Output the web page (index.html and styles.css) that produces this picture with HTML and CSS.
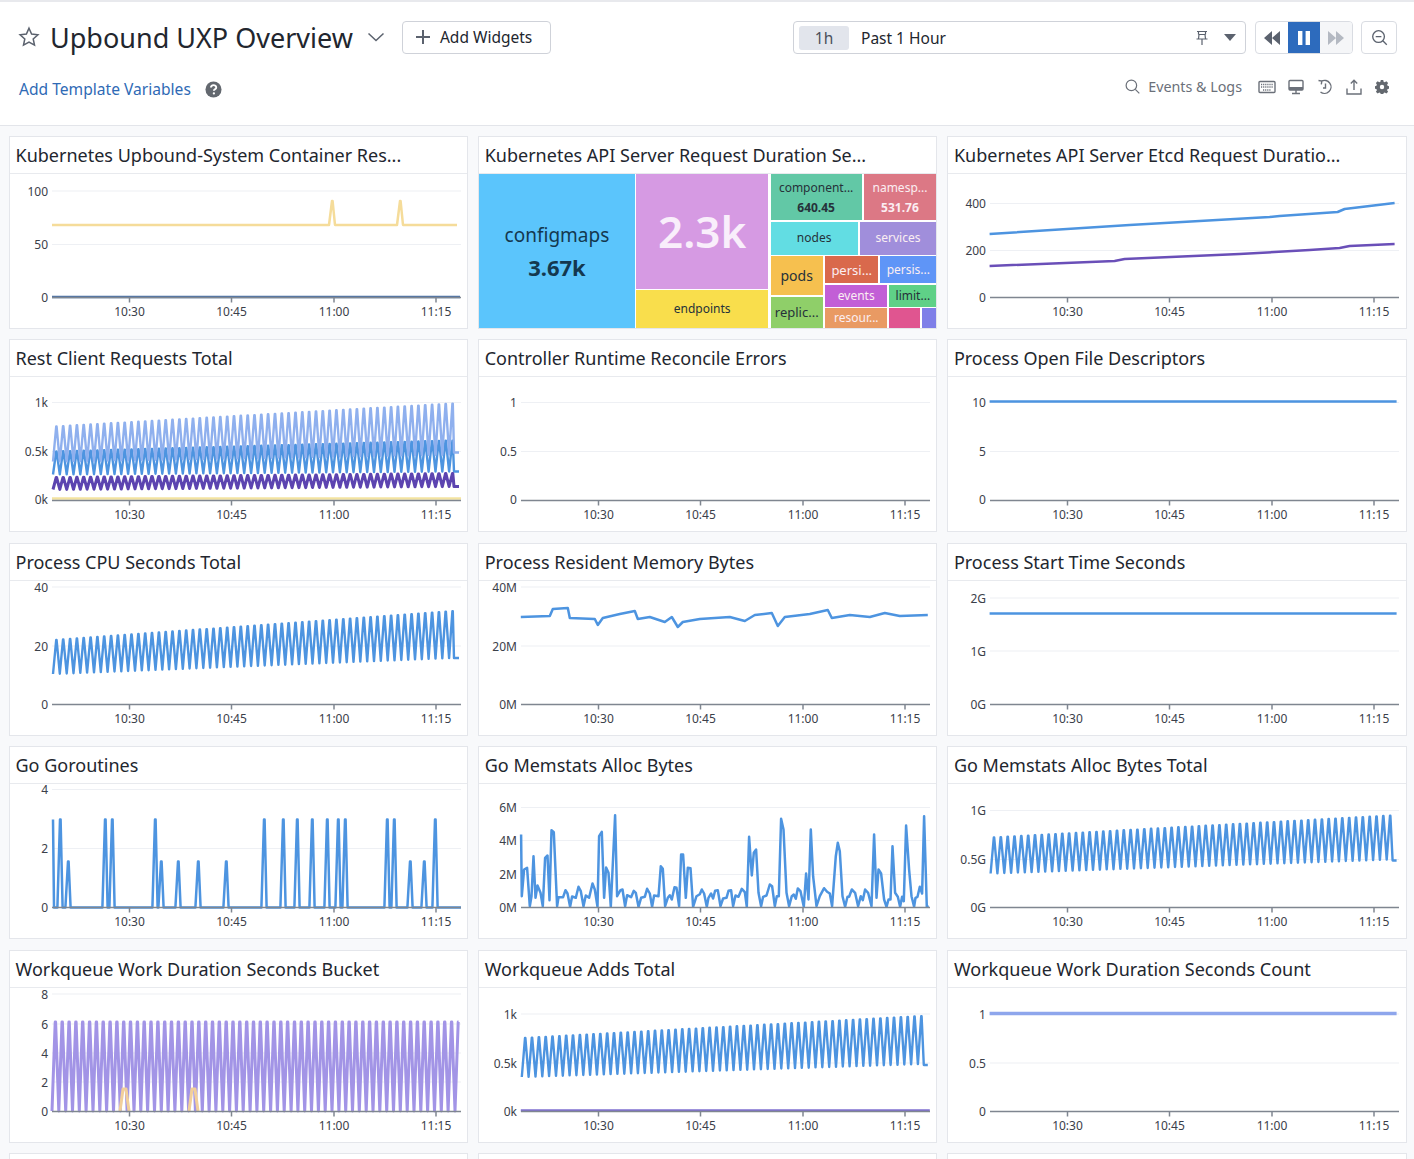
FILE: index.html
```html
<!DOCTYPE html>
<html>
<head>
  <title>Upbound UXP Overview</title>
  <link rel="stylesheet" href="styles.css">
</head>
<body>

  <!-- Dashboard header -->
  <header class="header">
    <div class="header-row top-row">
      <svg class="star-icon" viewBox="0 0 22 22"><path d="M11 2.2l2.6 5.8 6.3.7-4.7 4.2 1.3 6.2L11 16l-5.5 3.1 1.3-6.2-4.7-4.2 6.3-.7z"/></svg>
      <h1 class="dash-title">Upbound UXP Overview</h1>
      <svg class="chevron-icon" viewBox="0 0 18 10"><path d="M1.5 1.5L9 8.5l7.5-7"/></svg>
      <button class="add-btn"><svg viewBox="0 0 14 14"><path d="M7 0v14M0 7h14"/></svg>Add Widgets</button>

      <div class="time-picker">
        <span class="time-chip">1h</span>
        <span class="time-label">Past 1 Hour</span>
        <svg class="pin-icon" viewBox="0 0 14 16"><path d="M2 1.5h10M3.5 1.5v3M10.5 1.5v3M3.5 4.5h7M1.5 9h11M4 4.5L3.5 9M10 4.5l.5 4.5M7 9v6"/></svg>
        <svg class="caret-icon" viewBox="0 0 12 7"><path d="M0 0h12L6 7z"/></svg>
      </div>

      <div class="player">
        <button class="player-btn"><svg viewBox="0 0 16 14"><path d="M8 0v14L0 7zM16 0v14L8 7z"/></svg></button>
        <button class="player-btn active"><svg viewBox="0 0 12 14"><path d="M0 0h4.4v14H0zM7.6 0H12v14H7.6z"/></svg></button>
        <button class="player-btn off"><svg viewBox="0 0 16 14"><path d="M0 0l8 7-8 7zM8 0l8 7-8 7z"/></svg></button>
      </div>

      <button class="zoom-btn">
        <svg viewBox="0 0 18 18"><circle cx="8" cy="8" r="6.2"/><path d="M5 8h6M12.5 12.5l4.2 4.2"/></svg>
      </button>
    </div>

    <div class="header-row sub-row">
      <a class="template-link">Add Template Variables</a>
      <svg class="help-icon" viewBox="0 0 18 18"><circle cx="9" cy="9" r="8.5"/><path d="M6.3 7c0-3.4 5.6-3.4 5.6-.2 0 2-2.5 2-2.5 3.6" fill="none" stroke="#fff" stroke-width="2"/><circle cx="9.4" cy="13.2" r="1.2" fill="#fff"/></svg>

      <div class="tools">
        <svg class="search-icon" viewBox="0 0 16 16"><circle cx="6.8" cy="6.8" r="5.6"/><path d="M11 11l4.3 4.3"/></svg>
        <span class="tools-label">Events &amp; Logs</span>
        <svg class="tool-icon keyboard" viewBox="0 0 18 14"><rect x="1" y="1.5" width="16" height="11" rx="1"/><path d="M3 4.5h12M3 7h12M5 10h8" stroke-dasharray="1.2 .9"/></svg>
        <svg class="tool-icon" viewBox="0 0 16 15"><rect x="1" y="1" width="14" height="9.5" rx="1"/><path class="solid" d="M1 7.5h14v3H1z"/><path d="M8 10.5v3M4 14h8"/></svg>
        <svg class="tool-icon" viewBox="0 0 16 16"><path d="M4.500 2.100A6.500 6.500 0 1 1 3.500 13M1.500 1.500l3.300.5-.5 3.300M8.500 4.500v4.500H6"/></svg>
        <svg class="tool-icon" viewBox="0 0 16 16"><path d="M8 11V1.500M4.800 4.500L8 1.200l3.200 3.300M1 9.500v5.500h14V9.500"/></svg>
        <svg class="tool-icon gear" viewBox="0 0 16 16"><path d="M6.600 0h2.800l.4 2.100 1.300.6 1.900-1.200 2 2-1.200 1.800.6 1.400 2.100.4v2.800l-2.100.4-.6 1.400 1.200 1.800-2 2-1.900-1.200-1.300.6-.4 2.100H6.600l-.4-2.100-1.300-.6L3 15.500l-2-2 1.200-1.800-.6-1.400-2.100-.4V7.100l2.100-.4.6-1.400L1 3.500l2-2 1.900 1.200 1.300-.6zM8 5.500a2.500 2.500 0 1 0 0 5 2.500 2.500 0 0 0 0-5z" fill-rule="evenodd"/></svg>
      </div>
    </div>
  </header>

  <!-- Widgets -->
  <main class="board">
    <section class="panel">
      <h2 class="panel-title">Kubernetes Upbound-System Container Res...</h2>
      <div class="chart"></div>
    </section>

    <section class="panel">
      <h2 class="panel-title">Kubernetes API Server Request Duration Se...</h2>
      <div class="treemap">
        <div class="tile tile-configmaps">
          <span class="tile-name big">configmaps</span>
          <b class="tile-value big">3.67k</b>
        </div>
        <div class="tree-col tree-mid">
          <div class="tile tile-huge"><b>2.3k</b></div>
          <div class="tile tile-endpoints">endpoints</div>
        </div>
        <div class="tree-col tree-right">
          <div class="tree-row row-a">
            <div class="tile tile-component">
              <span>component...</span>
              <b>640.45</b>
            </div>
            <div class="tile tile-namespaces light">
              <span>namesp...</span>
              <b>531.76</b>
            </div>
          </div>
          <div class="tree-row row-b">
            <div class="tile tile-nodes">nodes</div>
            <div class="tile tile-services light">services</div>
          </div>
          <div class="tree-row row-c">
            <div class="tree-col col-pods">
              <div class="tile tile-pods">pods</div>
              <div class="tile tile-replic">replic...</div>
            </div>
            <div class="tree-col col-rest">
              <div class="tree-row rest-a">
                <div class="tile tile-persi light">persi...</div>
                <div class="tile tile-persis light">persis...</div>
              </div>
              <div class="tree-row rest-b">
                <div class="tile tile-events light">events</div>
                <div class="tile tile-limit">limit...</div>
              </div>
              <div class="tree-row rest-c">
                <div class="tile tile-resour light">resour...</div>
                <div class="tile tile-pink"></div>
                <div class="tile tile-violet"></div>
              </div>
            </div>
          </div>
        </div>
      </div>
    </section>

    <section class="panel">
      <h2 class="panel-title">Kubernetes API Server Etcd Request Duratio...</h2>
      <div class="chart"></div>
    </section>

    <section class="panel"><h2 class="panel-title">Rest Client Requests Total</h2><div class="chart"></div></section>
    <section class="panel"><h2 class="panel-title">Controller Runtime Reconcile Errors</h2><div class="chart"></div></section>
    <section class="panel"><h2 class="panel-title">Process Open File Descriptors</h2><div class="chart"></div></section>

    <section class="panel"><h2 class="panel-title">Process CPU Seconds Total</h2><div class="chart"></div></section>
    <section class="panel"><h2 class="panel-title">Process Resident Memory Bytes</h2><div class="chart"></div></section>
    <section class="panel"><h2 class="panel-title">Process Start Time Seconds</h2><div class="chart"></div></section>

    <section class="panel"><h2 class="panel-title">Go Goroutines</h2><div class="chart"></div></section>
    <section class="panel"><h2 class="panel-title">Go Memstats Alloc Bytes</h2><div class="chart"></div></section>
    <section class="panel"><h2 class="panel-title">Go Memstats Alloc Bytes Total</h2><div class="chart"></div></section>

    <section class="panel"><h2 class="panel-title">Workqueue Work Duration Seconds Bucket</h2><div class="chart"></div></section>
    <section class="panel"><h2 class="panel-title">Workqueue Adds Total</h2><div class="chart"></div></section>
    <section class="panel"><h2 class="panel-title">Workqueue Work Duration Seconds Count</h2><div class="chart"></div></section>

    <!-- Next row, cut off by the window -->
    <section class="panel"></section>
    <section class="panel"></section>
    <section class="panel"></section>
  </main>

  <script src="charts.js"></script>
</body>
</html>
```

FILE: styles.css
```css
* {
  box-sizing: border-box;
}

html, body {
  height: 100%;
  overflow: hidden;
}

body {
  margin: 0;
  background-color: #f8f9fb;
  font-family: "Noto Sans", sans-serif;
  color: #22262e;
}

button {
  font-family: inherit;
  padding: 0;
  background: none;
}

svg {
  display: block;
}

/* Header */
.header {
  height: 126px;
  background-color: white;
  border-top: 2px solid #e8e9ed;
  border-bottom: 1px solid #e3e5ea;
  padding: 18px 17px 0 19px;
}

.header-row {
  display: flex;
  align-items: center;
}

.top-row {
  height: 34px;
}

.star-icon {
  width: 22px;
  height: 22px;
  margin-left: -1px;
  fill: none;
  stroke: #5b626e;
  stroke-width: 1.500;
}

.dash-title {
  margin: 2px 0 0 10px;
  font-size: 27px;
  font-weight: 400;
  line-height: 34px;
  color: #22262e;
}

.chevron-icon {
  width: 18px;
  height: 10px;
  margin-left: 14px;
  fill: none;
  stroke: #5b626e;
  stroke-width: 1.500;
}

.add-btn {
  display: flex;
  align-items: center;
  width: 149px;
  height: 33px;
  margin-left: 17px;
  padding-left: 13px;
  border: 1px solid #cfd2d9;
  border-radius: 4px;
  font-size: 15.500px;
  color: #22262e;
}

.add-btn svg {
  width: 14px;
  height: 14px;
  margin-right: 10px;
  fill: none;
  stroke: #5b626e;
  stroke-width: 2;
}

.time-picker {
  display: flex;
  align-items: center;
  width: 453px;
  height: 33px;
  margin-left: auto;
  margin-top: 1px;
  padding: 0 9px 0 5px;
  border: 1px solid #cfd2d9;
  border-radius: 4px;
  font-size: 15.500px;
}

.time-chip {
  width: 50px;
  height: 24px;
  line-height: 24px;
  text-align: center;
  background-color: #e2e5ec;
  border-radius: 3px;
  color: #4a505c;
}

.time-label {
  margin-left: 12px;
  color: #22262e;
}

.pin-icon {
  width: 14px;
  height: 16px;
  margin-left: auto;
  fill: none;
  stroke: #5b626e;
  stroke-width: 1.200;
}

.caret-icon {
  width: 12px;
  height: 7px;
  margin-left: 15px;
  fill: #5b626e;
}

.player {
  display: flex;
  width: 98px;
  height: 33px;
  margin-left: 9px;
  margin-top: 1px;
  border: 1px solid #d9dce2;
  border-radius: 4px;
  overflow: hidden;
}

.player-btn {
  display: flex;
  flex: 1;
  align-items: center;
  justify-content: center;
  border: none;
}

.player-btn svg {
  width: 16px;
  height: 14px;
  fill: #5b626e;
}

.player-btn.active {
  background-color: #2d6bbd;
}

.player-btn.active svg {
  fill: white;
}

.player-btn.off {
  background-color: #f5f6f8;
}

.player-btn.off svg {
  fill: #b4b9c2;
}

.zoom-btn {
  display: flex;
  align-items: center;
  justify-content: center;
  width: 36px;
  height: 33px;
  margin-left: 8px;
  margin-top: 1px;
  border: 1px solid #d9dce2;
  border-radius: 4px;
}

.zoom-btn svg {
  width: 17px;
  height: 17px;
  fill: none;
  stroke: #5b626e;
  stroke-width: 1.400;
}

.sub-row {
  height: 24px;
  margin-top: 23px;
}

.template-link {
  font-size: 15.600px;
  color: #2f6ab5;
}

.help-icon {
  width: 17px;
  height: 17px;
  margin-left: 14px;
  fill: #63686f;
}

.tools {
  display: flex;
  align-items: center;
  margin-left: auto;
  margin-right: 8px;
  margin-top: -5px;
}

.search-icon {
  width: 15px;
  height: 15px;
  fill: none;
  stroke: #6b7079;
  stroke-width: 1.300;
}

.tools-label {
  margin-left: 8px;
  margin-right: 16px;
  font-size: 14.300px;
  color: #6b7079;
}

.tool-icon {
  width: 16px;
  height: 16px;
  margin-right: 13px;
  fill: none;
  stroke: #6b7079;
  stroke-width: 1.400;
}

.tool-icon .solid {
  fill: #6b7079;
  stroke: none;
}

.tool-icon.keyboard {
  width: 18px;
  margin-right: 12px;
}

.tool-icon.gear {
  width: 14px;
  height: 14px;
  margin-right: 0;
  fill: #63686f;
  stroke: none;
}

/* Widget grid */
.board {
  display: grid;
  grid-template-columns: repeat(3, 1fr);
  grid-auto-rows: 193px;
  column-gap: 10px;
  row-gap: 10.500px;
  height: calc(100vh - 126px);
  padding: 9.900px 7.400px 0 9px;
  overflow: hidden;
}

.panel {
  background-color: white;
  border: 1px solid #e4e6eb;
  display: flex;
  flex-direction: column;
  min-width: 0;
}

.panel-title {
  flex: none;
  height: 37px;
  margin: 0;
  padding-left: 5.500px;
  font-size: 18px;
  font-weight: 400;
  line-height: 36px;
  white-space: nowrap;
  color: #22262e;
  border-bottom: 1px solid #e8eaee;
}

.chart {
  flex: 1;
  min-height: 0;
}

.chart svg {
  width: 100%;
  height: 100%;
  overflow: visible;
}

.grid-line {
  stroke: #eef0f4;
  stroke-width: 1;
}

.axis-line {
  stroke: #7f8690;
  stroke-width: 1.500;
  fill: none;
}

.axis-text {
  font-family: "Noto Sans", sans-serif;
  font-size: 12px;
  fill: #3b404a;
}

.series {
  fill: none;
  stroke-linejoin: round;
}

/* Treemap */
.treemap {
  display: flex;
  flex: 1;
  gap: 1.500px;
  min-height: 0;
}

.tree-col {
  display: flex;
  flex-direction: column;
  gap: 1.500px;
  min-width: 0;
}

.tree-row {
  display: flex;
  gap: 2px;
  min-height: 0;
}

.tile {
  display: flex;
  flex-direction: column;
  align-items: center;
  justify-content: center;
  min-width: 0;
  font-size: 12px;
  line-height: 20px;
  white-space: nowrap;
  color: #26323a;
}

.tile b {
  font-weight: 700;
}

.tile.light {
  color: #fbeef2;
}

.tile-configmaps {
  width: 155.500px;
  background-color: #5bc5fc;
  color: #14384f;
}

.tile-name.big {
  font-size: 19px;
  line-height: 32px;
}

.tile-value.big {
  font-size: 22px;
  line-height: 32px;
}

.tree-mid {
  width: 132px;
  margin-right: 1px;
}

.tile-huge {
  flex: 115;
  background-color: #d69ae3;
  color: #f9eefb;
}

.tile-huge b {
  font-size: 44px;
  line-height: 50px;
  font-weight: 600;
}

.tile-endpoints {
  flex: 38;
  background-color: #f9de4c;
}

.tree-right {
  flex: 1;
}

.row-a {
  flex: 46;
}

.row-a .tile {
  padding-top: 1px;
}

.row-b {
  flex: 33;
}

.row-c {
  flex: 71;
  gap: 2.500px;
}

.tile-component {
  flex: 91;
  background-color: #62c8a6;
}

.tile-namespaces {
  flex: 73;
  background-color: #dc7885;
}

.tile-nodes {
  flex: 87;
  background-color: #62dde3;
}

.tile-services {
  flex: 77;
  background-color: #a08edb;
}

.col-pods {
  width: 52px;
}

.tile-pods {
  flex: 39;
  font-size: 14px;
  background-color: #f6c04f;
}

.tile-replic {
  flex: 31;
  font-size: 13px;
  background-color: #8fcf69;
}

.col-rest {
  flex: 1;
}

.rest-a {
  flex: 27;
}

.rest-b {
  flex: 22;
}

.rest-c {
  flex: 20;
}

.tile-persi {
  flex: 53;
  font-size: 13px;
  background-color: #d9694c;
}

.tile-persis {
  flex: 56;
  background-color: #5f95f7;
}

.tile-events {
  flex: 62;
  background-color: #c25fd6;
}

.tile-limit {
  flex: 47;
  background-color: #5fd187;
}

.tile-resour {
  flex: 62;
  background-color: #e99a63;
}

.tile-pink {
  flex: 31;
  background-color: #e05590;
}

.tile-violet {
  flex: 14;
  background-color: #7f7fe8;
}
```

FILE: charts.js
```js
// Draws the timeseries widgets. All numbers below are page pixels, the
// viewBox of each svg is set so they can be used directly.
const SVG_NS = "http://www.w3.org/2000/svg";

const BLUE = "#4d94e0";
const PERI = "#8ea6ec";
const PURPLE = "#5c44b0";
const YELLOW = "#f5dc9a";
const NAVY = "#4a72a8";

const COL_LEFT = [10, 479.2, 948.4];
const ROW_TOP = [174, 377.5, 581, 784.5, 988];
const PERIOD = 6.83;

// repeating peaks, top and bottom drift from left to right
function wave(x0, x1, topL, topR, botL, botR, tailTo, tailY) {
  const pts = [];
  for (let x = x0; x < x1; x += PERIOD) {
    const t = (x - x0) / (x1 - x0);
    const top = topL + (topR - topL) * t;
    const bot = botL + (botR - botL) * t;
    pts.push([x, bot], [x + PERIOD * 0.47, top], [x + PERIOD * 0.53, top]);
  }
  if (tailTo) {
    pts.push([x1 + 3, tailY], [tailTo, tailY]);
  }
  return pts;
}

function flat(x0, x1, y) {
  return [[x0, y], [x1, y]];
}

function spikes(x0, x1, base, list, w) {
  const pts = [[x0, base]];
  list.forEach(([x, y]) => {
    pts.push([x - w, base], [x, y], [x + 0.6, y], [x + w, base]);
  });
  pts.push([x1, base]);
  return pts;
}

const ALLOC_ZOOM = [154,255,156,440,163,360,172,355,180,470,185,440,191,320,197,445,203,408,212,430,219,470,226,325,233,318,239,452,245,242,252,248,262,470,266,443,280,443,287,422,293,432,301,472,307,441,318,445,326,412,333,425,341,470,348,438,358,445,368,402,375,420,383,472,388,260,396,247,403,445,409,354,416,370,423,472,436,197,442,440,452,422,458,420,466,470,472,437,484,443,492,424,498,430,506,472,514,445,525,442,532,418,540,432,547,472,553,438,566,440,573,350,579,358,586,470,594,445,600,437,606,450,614,413,620,415,628,470,634,315,640,315,648,445,654,355,662,356,670,472,680,440,690,434,696,420,703,432,711,472,716,445,724,432,730,447,736,424,744,422,752,470,760,447,770,445,776,424,784,422,790,470,797,438,806,442,816,418,825,428,831,472,838,262,846,378,852,310,859,300,866,430,874,470,880,442,890,438,900,405,907,410,915,470,921,440,927,440,934,208,941,240,950,430,958,470,966,440,972,435,978,448,984,417,992,425,1002,472,1009,372,1016,450,1023,240,1030,380,1040,470,1050,440,1063,416,1072,427,1080,432,1087,470,1098,320,1104,280,1110,305,1118,440,1126,472,1133,442,1138,442,1146,420,1156,430,1165,470,1173,440,1179,452,1186,420,1195,430,1205,470,1213,255,1220,445,1226,360,1234,372,1243,450,1250,472,1256,450,1262,450,1268,290,1276,430,1284,442,1291,472,1297,442,1302,455,1309,228,1318,360,1325,440,1333,472,1337,445,1343,442,1350,412,1357,432,1363,200,1371,472,1377,472];

function allocPoints() {
  const pts = [];
  for (let i = 0; i < ALLOC_ZOOM.length; i += 2) {
    pts.push([ALLOC_ZOOM[i] / 3 + 470, ALLOC_ZOOM[i + 1] / 3 + 750]);
  }
  return pts;
}

const CHARTS = [
  {
    col: 0, row: 0,
    labels: [["100", 191], ["50", 244.5], ["0", 297]],
    series: [
      { color: YELLOW, pts: spikes(52, 457, 225, [[332, 201], [400, 201]], 3) },
      { color: NAVY, pts: flat(52, 460, 297) }
    ]
  },
  {
    col: 2, row: 0,
    labels: [["400", 203.5], ["200", 250.5], ["0", 297]],
    series: [
      { color: BLUE, pts: [[990, 234], [1130, 225], [1270, 217], [1280, 216], [1338, 212], [1345, 209], [1370, 206], [1395, 203]] },
      { color: "#6a4fb8", pts: [[990, 266], [1115, 261], [1125, 259], [1240, 254], [1310, 250], [1340, 248], [1350, 246], [1395, 244]] }
    ]
  },
  {
    col: 0, row: 1,
    labels: [["1k", 403], ["0.5k", 452], ["0k", 500]],
    series: [
      { color: BLUE, width: 2.4, pts: wave(53, 451, 452, 441, 475, 472, 459, 472) },
      { color: "#8fb0ee", width: 2.4, pts: wave(53, 451, 427, 404, 462, 455, 459, 453) },
      { color: PURPLE, width: 3, pts: wave(53, 451, 478, 474, 490, 487, 459, 487) },
      { color: "#f3e3a0", pts: flat(52, 461, 499) }
    ]
  },
  {
    col: 1, row: 1,
    labels: [["1", 403], ["0.5", 452], ["0", 500]],
    series: []
  },
  {
    col: 2, row: 1,
    labels: [["10", 403], ["5", 452], ["0", 500]],
    series: [{ color: BLUE, pts: flat(990, 1397, 402) }]
  },
  {
    col: 0, row: 2,
    labels: [["40", 587], ["20", 646], ["0", 704.5]],
    series: [{ color: BLUE, width: 2.4, pts: wave(53, 451, 640, 611, 674, 658, 459, 658) }]
  },
  {
    col: 1, row: 2,
    labels: [["40M", 587], ["20M", 646], ["0M", 704.5]],
    series: [{
      color: BLUE,
      pts: [[521, 617], [550, 616], [553, 609], [568, 608], [570, 618], [595, 619], [598, 625], [603, 618], [620, 614], [635, 611], [638, 619], [650, 617], [665, 622], [672, 617], [678, 627], [683, 622], [700, 619], [730, 617], [745, 621], [755, 615], [772, 613], [778, 626], [785, 617], [810, 614], [828, 610], [832, 618], [850, 615], [870, 617], [885, 613], [900, 616], [928, 615]]
    }]
  },
  {
    col: 2, row: 2,
    labels: [["2G", 598], ["1G", 651], ["0G", 704.5]],
    series: [{ color: BLUE, pts: flat(990, 1397, 613.5) }]
  },
  {
    col: 0, row: 3,
    labels: [["4", 790], ["2", 849], ["0", 908]],
    series: [{
      color: BLUE,
      pts: [[53, 820]].concat(spikes(54, 461, 908, [[60, 820], [68, 862], [105, 820], [112, 820], [155, 820], [161, 862], [178, 862], [198, 862], [226, 862], [264, 820], [283, 820], [297, 820], [312, 820], [327, 820], [338, 820], [345, 820], [387, 820], [394, 820], [410, 862], [424, 862], [435, 820]], 2.6))
    }]
  },
  {
    col: 1, row: 3,
    labels: [["6M", 808], ["4M", 841], ["2M", 875], ["0M", 908]],
    series: [{ color: BLUE, pts: allocPoints() }]
  },
  {
    col: 2, row: 3,
    labels: [["1G", 811], ["0.5G", 860], ["0G", 908]],
    series: [{ color: BLUE, width: 2.4, pts: wave(991, 1390, 838, 816, 874, 860, 1397, 861) }]
  },
  {
    col: 0, row: 4,
    labels: [["8", 994], ["6", 1024], ["4", 1053], ["2", 1082], ["0", 1111]],
    series: [
      { color: "#a294e6", width: 3, pts: wave(52, 459, 1022, 1022, 1111, 1111) },
      { color: "#f2cf9a", width: 3, pts: [[120, 1111], [123, 1089], [126, 1089], [129, 1111]] },
      { color: "#f2cf9a", width: 3, pts: [[189, 1111], [192, 1089], [195, 1089], [198, 1111]] }
    ]
  },
  {
    col: 1, row: 4,
    labels: [["1k", 1014], ["0.5k", 1063], ["0k", 1111]],
    series: [
      { color: BLUE, width: 2.4, pts: wave(522, 921, 1038, 1016, 1077, 1064, 928, 1065) },
      { color: "#7f6fd0", pts: flat(521, 930, 1110.5) }
    ]
  },
  {
    col: 2, row: 4,
    labels: [["1", 1014], ["0.5", 1063], ["0", 1111]],
    series: [{ color: PERI, width: 3.5, pts: flat(990, 1397, 1013.5) }]
  }
];

const TICKS = [["10:30", 119.5], ["10:45", 221.5], ["11:00", 324], ["11:15", 426]];

function el(name, attrs, parent) {
  const node = document.createElementNS(SVG_NS, name);
  Object.keys(attrs).forEach(key => node.setAttribute(key, attrs[key]));
  parent.appendChild(node);
  return node;
}

function drawChart(box, chart) {
  const left = COL_LEFT[chart.col];
  const top = ROW_TOP[chart.row];
  const axisY = top + 123.5;
  const svg = el("svg", { viewBox: `${left} ${top} 457.2 154`, preserveAspectRatio: "none" }, box);

  chart.labels.forEach(([text, y]) => {
    if (y < axisY - 1.5) {
      el("line", { class: "grid-line", x1: left + 42, x2: left + 451, y1: y, y2: y }, svg);
    }
    const label = el("text", { class: "axis-text", x: left + 38, y: y + 5, "text-anchor": "end" }, svg);
    label.textContent = text;
  });

  chart.series.forEach(s => {
    el("polyline", {
      class: "series",
      stroke: s.color,
      "stroke-width": s.width || 2.5,
      points: s.pts.map(p => p[0].toFixed(1) + "," + p[1].toFixed(1)).join(" ")
    }, svg);
  });

  el("line", { class: "axis-line", x1: left + 42, x2: left + 451, y1: axisY, y2: axisY }, svg);

  TICKS.forEach(([text, x]) => {
    el("line", { class: "axis-line", x1: left + x, x2: left + x, y1: axisY, y2: axisY + 5 }, svg);
    const label = el("text", { class: "axis-text", x: left + x, y: axisY + 18.5, "text-anchor": "middle" }, svg);
    label.textContent = text;
  });
}

document.querySelectorAll(".chart").forEach((box, i) => drawChart(box, CHARTS[i]));
```
